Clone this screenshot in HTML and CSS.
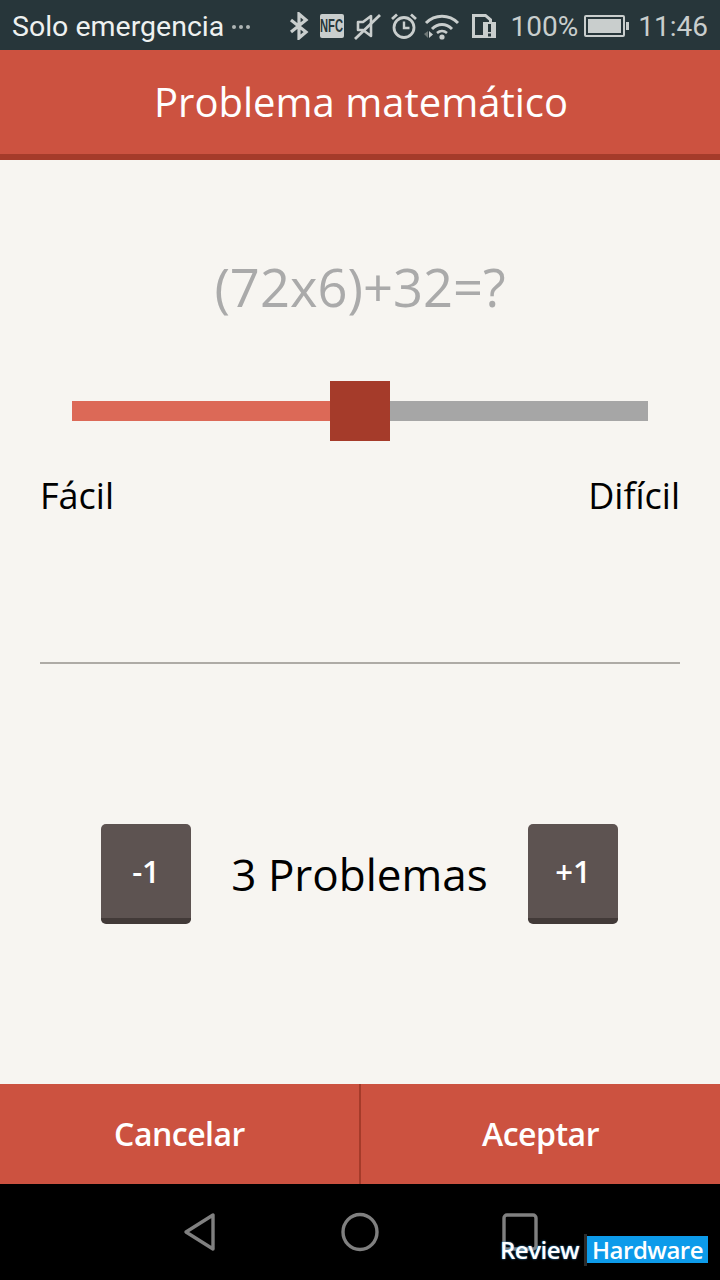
FILE: index.html
```html
<!DOCTYPE html>
<html lang="es">
<head>
    <meta charset="UTF-8">
    <meta name="viewport" content="width=device-width, initial-scale=1.0">
    <title>Problema matemático</title>
    <link rel="stylesheet" href="styles.css">
</head>
<body>
    <div class="screen">
        <div class="status-bar">
            <div class="status-left">
                <span class="carrier">Solo emergencia</span>
                <span class="dots"><i></i><i></i><i></i></span>
            </div>
            <div class="status-right">
                <svg class="icon-bt" width="20" height="28" viewBox="0 0 20 28">
                    <path d="M2 8l15 12-7 6V2l7 6L2 20" fill="none" stroke="#c9cecd" stroke-width="3.2"/>
                </svg>
                <span class="nfc"><span class="nfc-text">NFC</span></span>
                <svg class="icon-mute" width="28" height="28" viewBox="0 0 28 28">
                    <path d="M4 10h5l8-6v20l-8-6H4z" fill="none" stroke="#c9cecd" stroke-width="2.6" stroke-linejoin="round"/>
                    <path d="M1 27L26 3" stroke="#c9cecd" stroke-width="2.8"/>
                </svg>
                <svg class="icon-alarm" width="26" height="28" viewBox="0 0 26 28">
                    <circle cx="13" cy="15.5" r="10" fill="none" stroke="#c9cecd" stroke-width="2.8"/>
                    <path d="M13 9.5v6.5h5.5" fill="none" stroke="#c9cecd" stroke-width="2.4"/>
                    <path d="M1 7l5-4.5M25 7l-5-4.5" stroke="#c9cecd" stroke-width="2.8"/>
                </svg>
                <svg class="icon-wifi" width="36" height="28" viewBox="0 0 36 28">
                    <path d="M2 11C11 2 25 2 34 11" fill="none" stroke="#c9cecd" stroke-width="3"/>
                    <path d="M8 17c6-6 14-6 20 0" fill="none" stroke="#c9cecd" stroke-width="3"/>
                    <path d="M13 21c3-2.500 7-2.500 10 0" fill="none" stroke="#c9cecd" stroke-width="2.600"/>
                    <circle cx="18" cy="25" r="2.600" fill="#c9cecd"/>
                    <path d="M0 22l4-3v7z" fill="#6f7877"/>
                    <path d="M5 19l4 3.500-4 3.500z" fill="#c9cecd"/>
                </svg>
                <svg class="icon-sim" width="25" height="26" viewBox="0 0 25 26">
                    <path d="M1 25V1h14l6 5v3h-3V7.500L14 4H4v18h8v3z" fill="#c9cecd"/>
                    <path d="M12 9h13v16H12z" fill="#c9cecd"/>
                    <path d="M17 11h3v8h-3zM17 20.500h3v3h-3z" fill="#27363a"/>
                </svg>
                <span class="battery-text">100%</span>
                <span class="battery"><span class="battery-fill"></span></span>
                <span class="clock">11:46</span>
            </div>
        </div>

        <header class="app-header">
            <h1>Problema matemático</h1>
        </header>

        <main class="content">
            <p class="question">(72x6)+32=?</p>

            <div class="slider">
                <div class="slider-done"></div>
                <div class="slider-thumb"></div>
                <div class="slider-rest"></div>
            </div>

            <div class="levels">
                <span>Fácil</span>
                <span>Difícil</span>
            </div>

            <hr class="divider">

            <div class="counter">
                <button class="step" type="button">-1</button>
                <span class="count">3 Problemas</span>
                <button class="step" type="button">+1</button>
            </div>
        </main>

        <div class="actions">
            <button class="action" type="button">Cancelar</button>
            <button class="action" type="button">Aceptar</button>
        </div>

        <nav class="nav-bar">
            <svg width="34" height="40" viewBox="0 0 34 40">
                <path d="M30 3v34L3 20z" fill="none" stroke="#808080" stroke-width="3.400" stroke-linejoin="round"/>
            </svg>
            <svg width="40" height="40" viewBox="0 0 40 40">
                <ellipse cx="20" cy="20" rx="17" ry="17.500" fill="none" stroke="#808080" stroke-width="3.400"/>
            </svg>
            <svg width="36" height="38" viewBox="0 0 36 38">
                <rect x="2" y="2" width="32" height="34" rx="3" fill="none" stroke="#808080" stroke-width="3.400"/>
            </svg>
        </nav>

        <div class="watermark">
            <span class="wm-review">Review</span>
            <span class="wm-hardware">Hardware</span>
        </div>
    </div>
</body>
</html>
```

FILE: styles.css
```css
:root {
    --status-color: #27363a;
    --status-text: #c9cecd;
    --accent-color: #cc5240;
    --accent-dark: #a53b2a;
    --accent-light: #dc6957;
    --page-background: #f7f5f1;
    --key-color: #5d5351;
    --key-shadow: #423a38;
}

* {
    box-sizing: border-box;
}

body {
    margin: 0;
    background-color: #000000;
    font-family: 'Open Sans', sans-serif;
}

.screen {
    position: relative;
    display: flex;
    flex-direction: column;
    width: 720px;
    height: 1280px;
    overflow: hidden;
}

/* status bar */
.status-bar {
    display: flex;
    justify-content: space-between;
    align-items: center;
    height: 50px;
    padding: 2px 12px 0 12px;
    background-color: var(--status-color);
    font-family: 'Roboto', sans-serif;
    font-size: 28px;
}

.status-left,
.status-right {
    display: flex;
    align-items: center;
}

.carrier {
    color: #eef1f0;
    font-size: 28.5px;
}

.dots {
    display: flex;
    gap: 3px;
    margin-left: 8px;
    margin-top: 2px;
}

.dots i {
    width: 4px;
    height: 4px;
    border-radius: 50%;
    background-color: #aeb5b4;
}

.status-right {
    color: var(--status-text);
}

.icon-bt {
    margin-right: 11px;
}

.nfc {
    display: flex;
    justify-content: center;
    width: 24px;
    height: 24px;
    margin-right: 10px;
    border-radius: 2px;
    background-color: var(--status-text);
    color: var(--status-color);
    font-family: 'Liberation Sans', sans-serif;
    font-size: 18px;
    font-weight: bold;
    line-height: 24px;
}

.nfc-text {
    flex: none;
    transform: scaleX(0.62);
}

.icon-mute {
    margin-right: 9px;
}

.icon-alarm {
    margin-right: 7px;
}

.icon-wifi {
    margin-right: 11px;
}

.icon-sim {
    margin-right: 15px;
}

.battery {
    display: block;
    position: relative;
    width: 41px;
    height: 22px;
    margin: 0 13px 0 6px;
    padding: 2px;
    border: 2px solid var(--status-text);
    border-radius: 2px;
}

.battery::after {
    content: "";
    position: absolute;
    right: -6px;
    top: 5px;
    width: 3px;
    height: 8px;
    background-color: var(--status-text);
}

.battery-fill {
    display: block;
    height: 100%;
    background-color: var(--status-text);
}

/* header */
.app-header {
    display: flex;
    justify-content: center;
    align-items: center;
    height: 110px;
    padding: 0 0 2px 2px;
    background-color: var(--accent-color);
    border-bottom: 6px solid var(--accent-dark);
}

.app-header h1 {
    margin: 0;
    color: #ffffff;
    font-size: 40px;
    font-weight: normal;
}

/* main */
.content {
    display: flex;
    flex-direction: column;
    flex: 1;
    padding: 93px 40px 0 40px;
    background-color: var(--page-background);
}

.question {
    margin: 0;
    height: 68px;
    color: #aaaaaa;
    font-size: 52.5px;
    line-height: 68px;
    text-align: center;
}

.slider {
    display: flex;
    align-items: center;
    height: 60px;
    margin: 60px 32px 0 32px;
}

.slider-done {
    flex: none;
    width: 258px;
    height: 20px;
    background-color: var(--accent-light);
}

.slider-thumb {
    flex: none;
    width: 60px;
    height: 60px;
    background-color: var(--accent-dark);
}

.slider-rest {
    flex: 1;
    height: 20px;
    background-color: #a6a6a6;
}

.levels {
    display: flex;
    justify-content: space-between;
    margin-top: 32px;
    color: #000000;
    font-size: 36px;
    line-height: 46px;
}

.divider {
    width: 100%;
    height: 2px;
    margin: 143px 0 0 0;
    border: none;
    background-color: #aeaba6;
}

.counter {
    display: flex;
    justify-content: space-between;
    align-items: center;
    margin: 160px 62px 0 61px;
}

.step {
    width: 90px;
    height: 100px;
    padding: 0;
    border: none;
    border-bottom: 6px solid var(--key-shadow);
    border-radius: 5px;
    background-color: var(--key-color);
    color: #ffffff;
    font-family: 'Open Sans', sans-serif;
    font-size: 31px;
    font-weight: 600;
}

.count {
    color: #000000;
    font-size: 44px;
}

/* bottom buttons */
.actions {
    display: flex;
    height: 100px;
}

.action {
    flex: 1;
    padding: 0 0 2px 0;
    border: none;
    background-color: var(--accent-color);
    color: #ffffff;
    font-family: 'Open Sans', sans-serif;
    font-size: 32px;
    font-weight: 600;
    letter-spacing: -0.5px;
}

.action + .action {
    border-left: 2px solid var(--accent-dark);
}

/* nav */
.nav-bar {
    display: flex;
    justify-content: space-between;
    align-items: center;
    height: 96px;
    padding: 0 182px 0 183px;
    background-color: #000000;
}

/* watermark over the nav bar */
.watermark {
    position: absolute;
    left: 500px;
    top: 1236px;
    display: flex;
    align-items: center;
    gap: 8px;
    font-size: 24px;
    font-weight: 600;
    line-height: 27px;
    letter-spacing: -0.5px;
}

.wm-review {
    color: #ffffff;
    text-shadow: 0 0 2px #3aa0e8;
}

.wm-hardware {
    position: relative;
    height: 27px;
    padding: 0 5px;
    background-color: #0d9bea;
    color: #ffffff;
}

.wm-hardware::before {
    content: "";
    position: absolute;
    left: -3px;
    top: -2px;
    width: 3px;
    height: 32px;
    background-color: #2c2c2c;
}
```
